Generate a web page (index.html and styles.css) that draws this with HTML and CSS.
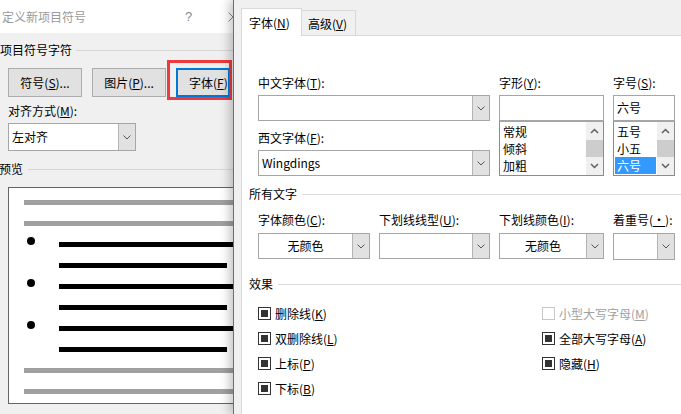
FILE: index.html
```html
<!DOCTYPE html>
<html lang="zh-CN">
<head>
<meta charset="utf-8">
<title>定义新项目符号 - 字体</title>
<link rel="stylesheet" href="styles.css">
</head>
<body>
<div class="screen">
  <section class="bullet-dlg">
    <header class="titlebar">
      <span class="title">定义新项目符号</span>
      <span class="help">?</span>
      <span class="close"><svg width="10" height="10" viewBox="0 0 10 10"><path d="M0.5 0.5 L9.5 9.5 M9.5 0.5 L0.5 9.5" stroke="#8a8a8a" stroke-width="1" fill="none"/></svg></span>
    </header>
    <div class="dlg-body">
      <div class="group-head"><span>项目符号字符</span><i class="rule"></i></div>
      <div class="btn-row">
        <div class="btn">符号(<u>S</u>)...</div>
        <div class="btn">图片(<u>P</u>)...</div>
        <div class="btn focus">字体(<u>F</u>)...</div>
        <span class="mark"></span>
      </div>
      <div class="field-label">对齐方式(<u>M</u>):</div>
      <div class="combo align-combo">
        <span class="combo-text">左对齐</span>
        <span class="combo-btn"><svg width="8" height="5" viewBox="0 0 8 5"><path d="M0.5 0.5 L4 4 L7.5 0.5" fill="none" stroke="#555"/></svg></span>
      </div>
      <div class="group-head preview-head"><span>预览</span><i class="rule"></i></div>
      <div class="preview">
        <div class="pl gray"></div>
        <div class="pl gray"></div>
        <div class="brow"><span class="bullet"></span><span class="bar long"></span></div>
        <div class="brow"><span class="bar short"></span></div>
        <div class="brow"><span class="bullet"></span><span class="bar long"></span></div>
        <div class="brow"><span class="bar short"></span></div>
        <div class="brow"><span class="bullet"></span><span class="bar long"></span></div>
        <div class="brow"><span class="bar short"></span></div>
        <div class="pl gray"></div>
        <div class="pl gray"></div>
      </div>
    </div>
  </section>

  <section class="font-dlg">
    <div class="tabs">
      <div class="tab active">字体(<u>N</u>)</div>
      <div class="tab other">高级(<u>V</u>)</div>
    </div>
    <div class="panel">
      <div class="top-grid">
        <div class="col">
          <div class="lbl">中文字体(<u>T</u>):</div>
          <div class="combo">
            <span class="combo-text"></span>
            <span class="combo-btn"><svg width="8" height="5" viewBox="0 0 8 5"><path d="M0.5 0.5 L4 4 L7.5 0.5" fill="none" stroke="#555"/></svg></span>
          </div>
          <div class="lbl second">西文字体(<u>F</u>):</div>
          <div class="combo">
            <span class="combo-text">Wingdings</span>
            <span class="combo-btn"><svg width="8" height="5" viewBox="0 0 8 5"><path d="M0.5 0.5 L4 4 L7.5 0.5" fill="none" stroke="#555"/></svg></span>
          </div>
        </div>
        <div class="col">
          <div class="lbl">字形(<u>Y</u>):</div>
          <div class="input"></div>
          <div class="listbox">
            <div class="items">
              <div class="item">常规</div>
              <div class="item">倾斜</div>
              <div class="item">加粗</div>
            </div>
            <div class="vscroll">
              <span class="arrow"><svg width="9" height="6" viewBox="0 0 9 6"><path d="M1 5 L4.5 1.5 L8 5" fill="none" stroke="#606060" stroke-width="1.5"/></svg></span>
              <span class="thumb"></span>
              <span class="arrow"><svg width="9" height="6" viewBox="0 0 9 6"><path d="M1 1 L4.5 4.5 L8 1" fill="none" stroke="#606060" stroke-width="1.5"/></svg></span>
            </div>
          </div>
        </div>
        <div class="col">
          <div class="lbl">字号(<u>S</u>):</div>
          <div class="input">六号</div>
          <div class="listbox">
            <div class="items">
              <div class="item">五号</div>
              <div class="item">小五</div>
              <div class="item selected">六号</div>
            </div>
            <div class="vscroll">
              <span class="arrow"><svg width="9" height="6" viewBox="0 0 9 6"><path d="M1 5 L4.5 1.5 L8 5" fill="none" stroke="#606060" stroke-width="1.5"/></svg></span>
              <span class="thumb"></span>
              <span class="arrow"><svg width="9" height="6" viewBox="0 0 9 6"><path d="M1 1 L4.5 4.5 L8 1" fill="none" stroke="#606060" stroke-width="1.5"/></svg></span>
            </div>
          </div>
        </div>
      </div>

      <div class="sec-head"><span>所有文字</span><i class="rule"></i></div>
      <div class="mid-grid">
        <div class="col">
          <div class="lbl">字体颜色(<u>C</u>):</div>
          <div class="combo small">
            <span class="combo-text center">无颜色</span>
            <span class="combo-btn"><svg width="8" height="5" viewBox="0 0 8 5"><path d="M0.5 0.5 L4 4 L7.5 0.5" fill="none" stroke="#555"/></svg></span>
          </div>
        </div>
        <div class="col">
          <div class="lbl">下划线线型(<u>U</u>):</div>
          <div class="combo small">
            <span class="combo-text"></span>
            <span class="combo-btn"><svg width="8" height="5" viewBox="0 0 8 5"><path d="M0.5 0.5 L4 4 L7.5 0.5" fill="none" stroke="#555"/></svg></span>
          </div>
        </div>
        <div class="col">
          <div class="lbl">下划线颜色(<u>I</u>):</div>
          <div class="combo small">
            <span class="combo-text center">无颜色</span>
            <span class="combo-btn"><svg width="8" height="5" viewBox="0 0 8 5"><path d="M0.5 0.5 L4 4 L7.5 0.5" fill="none" stroke="#555"/></svg></span>
          </div>
        </div>
        <div class="col">
          <div class="lbl">着重号(<u>·</u>):</div>
          <div class="combo small tall">
            <span class="combo-text"></span>
            <span class="combo-btn"><svg width="8" height="5" viewBox="0 0 8 5"><path d="M0.5 0.5 L4 4 L7.5 0.5" fill="none" stroke="#555"/></svg></span>
          </div>
        </div>
      </div>

      <div class="sec-head effects"><span>效果</span><i class="rule"></i></div>
      <div class="checks">
        <div class="chk"><span class="cbox"></span><span>删除线(<u>K</u>)</span></div>
        <div class="chk disabled"><span class="cbox"></span><span>小型大写字母(<u>M</u>)</span></div>
        <div class="chk"><span class="cbox"></span><span>双删除线(<u>L</u>)</span></div>
        <div class="chk"><span class="cbox"></span><span>全部大写字母(<u>A</u>)</span></div>
        <div class="chk"><span class="cbox"></span><span>上标(<u>P</u>)</span></div>
        <div class="chk"><span class="cbox"></span><span>隐藏(<u>H</u>)</span></div>
        <div class="chk"><span class="cbox"></span><span>下标(<u>B</u>)</span></div>
      </div>
    </div>
  </section>
</div>
</body>
</html>
```
FILE: styles.css
```css
* { box-sizing: border-box; }
html, body { margin: 0; padding: 0; }
body {
  width: 681px;
  height: 414px;
  overflow: hidden;
  background: #f0f0f0;
  color: #000;
  font-family: "Noto Sans CJK SC", "Microsoft YaHei", sans-serif;
  font-size: 12px;
}
u { text-underline-offset: 1px; text-decoration-thickness: 1px; }

.screen { display: flex; width: 681px; height: 414px; overflow: hidden; }

/* ---------- left dialog ---------- */
.bullet-dlg {
  width: 233px;
  flex: none;
  display: flex;
  flex-direction: column;
  overflow: hidden;
  background: #f0f0f0;
}
.titlebar {
  height: 33px;
  flex: none;
  background: #fff;
  display: flex;
  align-items: center;
  color: #9a9a9a;
  white-space: nowrap;
}
.title { flex: 1; padding-left: 2px; line-height: 20px; }
.help {
  flex: none;
  width: 8px;
  margin-right: 35px;
  font-family: "Liberation Sans", sans-serif;
  font-size: 13px;
  color: #8a8a8a;
}
.close { flex: none; width: 10px; height: 10px; margin-right: -5px; display: flex; }

.dlg-body { flex: 1; display: flex; flex-direction: column; min-width: 0; }
.group-head {
  display: flex;
  align-items: center;
  height: 18px;
  line-height: 18px;
  margin-top: 8px;
  white-space: nowrap;
  flex: none;
}
.group-head .rule { flex: 1; height: 1px; background: #d8d8d8; margin-left: 4px; }
.preview-head { margin-top: 9px; margin-left: -1px; }
.preview-head .rule { margin-left: 5px; }

.btn-row {
  position: relative;
  display: flex;
  gap: 10px;
  padding-left: 8px;
  margin-top: 9px;
  height: 29px;
  flex: none;
}
.btn {
  flex: none;
  width: 74px;
  height: 29px;
  border: 1px solid #adadad;
  background: #e1e1e1;
  line-height: 27px;
  text-align: center;
  white-space: nowrap;
}
.btn.focus {
  width: 54px;
  border: 2px solid #0078d7;
  text-align: left;
  padding-left: 11px;
  overflow: hidden;
  line-height: 25px;
}
.mark {
  position: absolute;
  left: 167px;
  top: -8px;
  width: 65px;
  height: 40px;
  border: 3px solid #ee3a3c;
}
.field-label { padding-left: 8px; margin-top: 4px; line-height: 20px; flex: none; }

.combo {
  display: flex;
  height: 26px;
  border: 1px solid #a6a6a6;
  background: #fff;
  flex: none;
}
.combo-text {
  flex: 1;
  min-width: 0;
  padding-left: 3px;
  line-height: 24px;
  white-space: nowrap;
}
.combo-text.center { text-align: center; padding-left: 0; }
.combo-btn {
  flex: none;
  width: 17px;
  background: #e1e1e1;
  border-left: 1px solid #b4b4b4;
  display: flex;
  align-items: center;
  justify-content: center;
}
.align-combo { margin: 2px 0 0 8px; width: 128px; height: 28px; }
.align-combo .combo-text { line-height: 26px; }

.preview {
  flex: none;
  margin: 9px 0 0 8px;
  width: 262px;
  height: 217px;
  border: 1px solid #646464;
  background: #fff;
  padding: 12px 0 0 15px;
  display: flex;
  flex-direction: column;
  gap: 16px;
}
.pl { flex: none; height: 5px; }
.pl.gray { background: #a0a0a0; width: 240px; }
.brow { flex: none; height: 5px; display: flex; align-items: flex-start; }
.bullet {
  flex: none;
  width: 8px;
  height: 8px;
  border-radius: 50%;
  background: #000;
  margin: -5px 0 0 3px;
}
.bar { flex: none; height: 5px; background: #000; }
.bar.long { margin-left: 24px; width: 210px; }
.bar.short { margin-left: 35px; width: 168px; }

/* ---------- right dialog ---------- */
.font-dlg {
  flex: 1;
  min-width: 0;
  position: relative;
  z-index: 1;
  display: flex;
  flex-direction: column;
  background: #f0f0f0;
  border-left: 1px solid #6e6e6e;
  box-shadow: -4px 0 9px rgba(0, 0, 0, 0.22);
  padding: 8px 0 0 7px;
}
.tabs { display: flex; align-items: flex-end; height: 27px; flex: none; }
.tab { white-space: nowrap; flex: none; }
.tab.active {
  position: relative;
  z-index: 1;
  width: 61px;
  height: 28px;
  margin-bottom: -1px;
  background: #fff;
  border: 1px solid #d9d9d9;
  border-bottom: none;
  padding-left: 7px;
  line-height: 28px;
}
.tab.other {
  width: 54px;
  height: 25px;
  background: #f0f0f0;
  border-top: 1px solid #d9d9d9;
  border-right: 1px solid #d9d9d9;
  padding-left: 6px;
  line-height: 26px;
}
.panel {
  flex: 1;
  background: #fff;
  border-top: 1px solid #d9d9d9;
  border-left: 1px solid #d9d9d9;
  padding: 37px 0 0 16px;
}

.top-grid { display: grid; grid-template-columns: 232px 105px 62px; column-gap: 9px; }
.mid-grid { display: grid; grid-template-columns: 112px 111px 105px 62px; column-gap: 9px; margin-top: 7px; }
.col { display: flex; flex-direction: column; min-width: 0; }
.lbl { height: 20px; line-height: 20px; white-space: nowrap; }
.top-grid .lbl + .combo, .top-grid .lbl + .input { margin-top: 2px; }
.lbl.second { margin-top: 7px; }
.mid-grid .combo { margin-top: 3px; }
.combo.tall { height: 27px; }

.input {
  height: 26px;
  border: 1px solid #a6a6a6;
  background: #fff;
  padding-left: 3px;
  line-height: 24px;
}
.listbox {
  height: 55px;
  border: 1px solid #8c8c8c;
  border-top-color: #a6a6a6;
  background: #fff;
  display: flex;
}
.items { flex: 1; min-width: 0; padding: 1px; }
.item { height: 17px; line-height: 17px; padding-left: 2px; white-space: nowrap; }
.item.selected { background: #3399ff; color: #fff; }
.vscroll { flex: none; width: 17px; background: #f0f0f0; display: flex; flex-direction: column; }
.arrow { flex: none; height: 18px; display: flex; align-items: center; justify-content: center; }
.thumb { flex: none; height: 17px; background: #cdcdcd; }

.sec-head {
  display: flex;
  align-items: center;
  height: 18px;
  line-height: 18px;
  margin: 9px 0 0 -9px;
  white-space: nowrap;
}
.sec-head .rule { flex: 1; height: 1px; background: #dcdcdc; margin-left: 5px; }
.sec-head.effects { margin-top: 15px; }

.checks {
  display: grid;
  grid-template-columns: 284px auto;
  grid-auto-rows: 25px;
  margin-top: 8px;
}
.chk { display: flex; align-items: center; gap: 4px; white-space: nowrap; line-height: 25px; }
.cbox {
  flex: none;
  width: 13px;
  height: 13px;
  border: 1px solid #333;
  padding: 2px;
  background: #fff;
}
.cbox::after { content: ""; display: block; width: 7px; height: 7px; background: #333; }
.chk.disabled { color: #a0a0a0; }
.chk.disabled .cbox { border-color: #c8c8c8; }
.chk.disabled .cbox::after { display: none; }
```
